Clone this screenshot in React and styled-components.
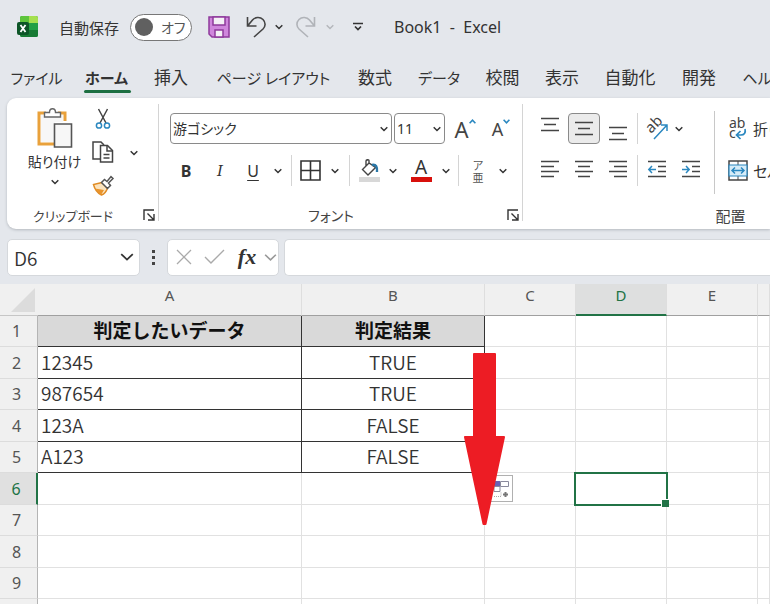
import React from "react";
import styled, { createGlobalStyle } from "styled-components";

const GlobalStyle = createGlobalStyle`
  * {
    box-sizing: border-box;
  }

  body {
    margin: 0;
    overflow: hidden;
    background-color: #e4e7ec;
    color: #333333;
    font-family: "Noto Sans", "Noto Sans CJK JP", sans-serif;
    font-size: 16px;
  }

  svg {
    overflow: visible;
  }

  button,
  input,
  select {
    margin: 0;
    padding: 0;
    border: none;
    background: none;
    color: inherit;
    font: inherit;
    font-feature-settings: inherit;
  }
`;

const tabs = [
  { name: "ファイル", width: 73, kana: true },
  { name: "ホーム", width: 67, kana: true, active: true },
  { name: "挿入", width: 62 },
  { name: "ページ レイアウト", width: 143, kana: true },
  { name: "数式", width: 60 },
  { name: "データ", width: 68, kana: true },
  { name: "校閲", width: 59 },
  { name: "表示", width: 60 },
  { name: "自動化", width: 76 },
  { name: "開発", width: 62 },
  { name: "ヘルプ", width: 68, kana: true },
];

const columns = [
  { name: "A", width: 264 },
  { name: "B", width: 183 },
  { name: "C", width: 91 },
  { name: "D", width: 91 },
  { name: "E", width: 91 },
  { name: "" },
];

const rows = [
  ["判定したいデータ", "判定結果"],
  ["12345", "TRUE"],
  ["987654", "TRUE"],
  ["123A", "FALSE"],
  ["A123", "FALSE"],
  [],
  [],
  [],
  [],
  [],
];

export default function App() {
  return (
    <Window>
      <GlobalStyle />
      <TitleBar />
      <Tabs>
        {tabs.map((tab) => (
          <Tab key={tab.name} $width={tab.width} $kana={tab.kana} $active={tab.active}>
            {tab.name}
          </Tab>
        ))}
      </Tabs>
      <Ribbon>
        <ClipboardGroup />
        <FontGroup />
        <AlignmentGroup />
      </Ribbon>
      <FormulaBar />
      <Sheet />
    </Window>
  );
}

const Window = styled.div`
  display: flex;
  flex-direction: column;
  height: 100vh;
  overflow: hidden;
`;

/* ---------- title bar ---------- */

function TitleBar() {
  return (
    <Header>
      <ExcelIcon />
      <AutoSave>
        自動保存
        <Switch>
          <SwitchInput type="checkbox" role="switch" />
          <SwitchText>オフ</SwitchText>
        </Switch>
      </AutoSave>
      <QuickAccess>
        <Slot as="button" aria-label="保存" $width={44}>
          <SaveIcon />
        </Slot>
        <Slot as="button" aria-label="元に戻す" $width={30}>
          <UndoIcon />
        </Slot>
        <ChevronButton $width={16} label="元に戻す履歴" />
        <Slot as="button" aria-label="やり直し" $width={38} disabled>
          <UndoIcon redo />
        </Slot>
        <ChevronButton $width={10} label="やり直し履歴" color="#b4b7bb" />
        <Slot as="button" aria-label="カスタマイズ" $width={46}>
          <svg width="10" height="10" fill="none" stroke="#333" strokeWidth="1.7">
            <path d="M0 1.5h10M2 4.5 5 7.5 8 4.5" />
          </svg>
        </Slot>
      </QuickAccess>
      <Title>{"Book1  -  Excel"}</Title>
    </Header>
  );
}

const Header = styled.header`
  display: flex;
  flex: none;
  align-items: center;
  height: 54px;
  padding-left: 17px;
`;

const AutoSave = styled.label`
  display: flex;
  align-items: center;
  gap: 11px;
  margin-left: 21px;
  font-size: 15px;
`;

const Switch = styled.span`
  display: grid;
  align-items: center;
  width: 62px;
  height: 27px;
`;

const SwitchInput = styled.input`
  display: flex;
  grid-area: 1 / 1;
  align-items: center;
  width: 100%;
  height: 100%;
  padding-left: 4px;
  appearance: none;
  border: 1px solid #777777;
  border-radius: 14px;
  background-color: #ffffff;

  &::before {
    content: "";
    width: 18px;
    height: 18px;
    border-radius: 50%;
    background-color: #606060;
  }
`;

const SwitchText = styled.span`
  grid-area: 1 / 1;
  padding-left: 31px;
  color: #555555;
  font-size: 14px;
  font-feature-settings: "palt";
`;

const QuickAccess = styled.div`
  display: flex;
  align-items: center;
  margin-left: 5px;
`;

const Title = styled.div`
  margin-left: 13px;
  white-space: pre;
`;

/* ---------- tabs ---------- */

const Tabs = styled.nav`
  display: flex;
  flex: none;
  height: 44px;
  padding-top: 10px;
`;

const Tab = styled.button`
  position: relative;
  flex: none;
  width: ${(props) => props.$width}px;
  height: 28px;
  font-size: ${(props) => (props.$kana ? 15 : 17)}px;
  font-weight: ${(props) => (props.$active ? 700 : 400)};
  font-feature-settings: "palt";
  line-height: 28px;
  white-space: nowrap;

  &::after {
    content: "";
    display: ${(props) => (props.$active ? "block" : "none")};
    position: absolute;
    right: 9px;
    bottom: -1px;
    left: 11px;
    height: 3px;
    border-radius: 2px;
    background-color: #1d6f42;
  }
`;

/* ---------- ribbon ---------- */

const Ribbon = styled.section`
  display: flex;
  flex: none;
  height: 131px;
  margin-left: 7px;
  overflow: hidden;
  border-radius: 9px 0 0 9px;
  background-color: #ffffff;
  box-shadow: 0 1px 3px #b4b8be;
`;

function Group({ label, labelSize, width, launcher, children }) {
  return (
    <GroupWrapper $width={width}>
      <GroupBody>{children}</GroupBody>
      <GroupFooter $size={labelSize}>
        {label}
        {launcher && (
          <Launcher aria-label={label + "の設定"}>
            <svg width="12" height="12" fill="none" stroke="#333" strokeWidth="1.4">
              <path d="M1 11V1h10M4.5 4.5l6 6M11 5v6H5" />
            </svg>
          </Launcher>
        )}
      </GroupFooter>
    </GroupWrapper>
  );
}

const GroupWrapper = styled.div`
  display: flex;
  flex: none;
  flex-direction: column;
  position: relative;
  width: ${(props) => props.$width}px;

  &::after {
    content: "";
    position: absolute;
    top: 6px;
    right: 0;
    bottom: 8px;
    width: 1px;
    background-color: #d4d4d4;
  }
`;

const GroupBody = styled.div`
  display: flex;
  flex: 1;
`;

const GroupFooter = styled.div`
  display: flex;
  align-items: center;
  justify-content: center;
  position: relative;
  height: 28px;
  padding-right: 20px;
  color: #444444;
  font-size: ${(props) => props.$size}px;
  font-feature-settings: "palt";
`;

const Launcher = styled.button`
  position: absolute;
  right: 4px;
  height: 12px;
  line-height: 0;
`;

const Slot = styled.span`
  display: flex;
  flex: none;
  align-items: center;
  justify-content: center;
  width: ${(props) => props.$width}px;
  height: 31px;
`;

const Divider = styled.span`
  flex: none;
  width: 1px;
  height: 31px;
  margin: 0 ${(props) => props.$space || 4}px;
  background-color: #d4d4d4;
`;

const ToolRows = styled.div`
  display: flex;
  flex: none;
  flex-direction: column;
  gap: 11px;
  padding: 15px 0 0 10px;
`;

const ToolRow = styled.div`
  display: flex;
  align-items: center;
  height: 31px;
`;

function Chevron({ color = "#333", size = 8 }) {
  return (
    <svg width={size} height={size} viewBox="0 0 8 8" fill="none" stroke={color} strokeWidth={size > 8 ? 1 : 1.5}>
      <path d="M0.7 2.3 4 5.5 7.3 2.3" />
    </svg>
  );
}

function ChevronButton({ $width, label, color }) {
  return (
    <Slot as="button" aria-label={label} $width={$width}>
      <Chevron color={color} />
    </Slot>
  );
}

function ClipboardGroup() {
  return (
    <Group label="クリップボード" labelSize={13} width={152} launcher>
      <Paste>
        <PasteIcon />
        <span>貼り付け</span>
        <Chevron />
      </Paste>
      <ClipboardTools>
        <button aria-label="切り取り">
          <CutIcon />
        </button>
        <button aria-label="コピー">
          <CopyIcon />
        </button>
        <button aria-label="書式のコピー">
          <BrushIcon />
        </button>
      </ClipboardTools>
      <CopyMenu>
        <ChevronButton $width={20} label="コピーのオプション" />
      </CopyMenu>
    </Group>
  );
}

const Paste = styled.button`
  display: flex;
  flex-direction: column;
  align-items: center;
  width: 71px;
  margin-left: 12px;
  padding-top: 9px;
  font-size: 14px;
  font-feature-settings: "palt";
  line-height: 26px;
  white-space: nowrap;

  > svg:last-child {
    margin-top: 3px;
  }
`;

const ClipboardTools = styled.div`
  display: flex;
  flex-direction: column;
  gap: 9px;
  padding-top: 9px;

  button {
    width: 26px;
    height: 24px;
    line-height: 0;
  }
`;

const CopyMenu = styled.div`
  padding-top: 39px;
  padding-left: 8px;
`;

function FontGroup() {
  return (
    <Group label="フォント" labelSize={14} width={364} launcher>
      <ToolRows>
        <ToolRow>
          <Dropdown $width={222}>
            <select aria-label="フォント">
              <option>游ゴシック</option>
            </select>
            <Chevron />
          </Dropdown>
          <Dropdown $width={51}>
            <select aria-label="フォント サイズ">
              <option>11</option>
            </select>
            <Chevron />
          </Dropdown>
          <Slot as="button" aria-label="フォント サイズの拡大" $width={38}>
            <LetterSize $size={22}>A</LetterSize>
            <Caret up />
          </Slot>
          <Slot as="button" aria-label="フォント サイズの縮小" $width={34}>
            <LetterSize $size={18}>A</LetterSize>
            <Caret />
          </Slot>
        </ToolRow>
        <ToolRow>
          <Letter as="button" $width={34} $weight={700}>
            B
          </Letter>
          <Letter as="button" $width={34} $italic>
            I
          </Letter>
          <Letter as="button" $width={32} $underline>
            U
          </Letter>
          <ChevronButton $width={18} label="下線の種類" />
          <Divider />
          <Slot as="button" aria-label="罫線" $width={29}>
            <svg width="21" height="21" fill="none" stroke="#333" strokeWidth="1.6">
              <path d="M1 1h19v19H1zM10.500 1v19M1 10.500h19" />
            </svg>
          </Slot>
          <ChevronButton $width={20} label="罫線の種類" />
          <Divider />
          <Slot as="button" aria-label="塗りつぶしの色" $width={30}>
            <FillIcon />
          </Slot>
          <ChevronButton $width={18} label="色の選択" />
          <Slot as="button" aria-label="フォントの色" $width={38}>
            <FontColor>A</FontColor>
          </Slot>
          <ChevronButton $width={12} label="文字色の選択" />
          <Divider $space={6} />
          <Phonetic>
            <span>ア</span>
            <span>亜</span>
          </Phonetic>
          <ChevronButton $width={24} label="ふりがなの設定" />
        </ToolRow>
      </ToolRows>
    </Group>
  );
}

const Dropdown = styled.label`
  display: grid;
  align-items: center;
  width: ${(props) => props.$width}px;
  height: 31px;
  margin: 0 1px;

  select {
    grid-area: 1 / 1;
    width: 100%;
    height: 100%;
    padding-left: 2px;
    appearance: none;
    border: 1px solid #8a8a8a;
    border-radius: 4px;
    font-size: 14px;
    font-feature-settings: "palt";
  }

  svg {
    grid-area: 1 / 1;
    justify-self: end;
    margin-right: 4px;
    pointer-events: none;
  }
`;

const LetterSize = styled.span`
  color: #444444;
  font-size: ${(props) => props.$size}px;
  line-height: 28px;
`;

function Caret({ up }) {
  return (
    <CaretIcon width="7" height="5" fill="none" stroke="#2b88c0" strokeWidth="1.6">
      <path d={up ? "M.6 4.2 3.5 1.2 6.4 4.2" : "M.6.8 3.5 3.8 6.4.8"} />
    </CaretIcon>
  );
}

const CaretIcon = styled.svg`
  align-self: flex-start;
  margin-top: 6px;
`;

const Letter = styled(Slot)`
  font-family: ${(props) => (props.$italic ? '"DejaVu Serif", serif' : "inherit")};
  font-size: ${(props) => (props.$italic ? 15 : 16)}px;
  font-style: ${(props) => (props.$italic ? "italic" : "normal")};
  font-weight: ${(props) => props.$weight || 400};
  line-height: 28px;
  text-decoration: ${(props) => (props.$underline ? "underline" : "none")};
  text-underline-offset: 3px;
`;

const FontColor = styled.span`
  width: 21px;
  height: 23px;
  border-bottom: 5px solid #d8100c;
  font-size: 19px;
  line-height: 17px;
  text-align: center;
`;

const Phonetic = styled.button`
  display: flex;
  flex-direction: column;
  width: 26px;
  color: #555555;
  font-family: "Noto Sans CJK JP", sans-serif;
  font-size: 11px;
  line-height: 12px;
`;

function AlignmentGroup() {
  return (
    <Group label="配置" labelSize={15} width={435}>
      <ToolRows>
        <ToolRow>
          <Slot as="button" aria-label="上揃え" $width={34}>
            <Lines y={5} lines={[[0, 18], [3, 15], [0, 18]]} />
          </Slot>
          <ActiveSlot as="button" aria-label="上下中央揃え" $width={32}>
            <Lines y={9} lines={[[0, 18], [3, 15], [0, 18]]} />
          </ActiveSlot>
          <Slot as="button" aria-label="下揃え" $width={34}>
            <Lines y={14} lines={[[0, 18], [3, 15], [0, 18]]} />
          </Slot>
          <Divider $space={2} />
          <Slot as="button" aria-label="方向" $width={34}>
            <OrientationIcon />
          </Slot>
          <ChevronButton $width={10} label="方向の設定" />
        </ToolRow>
        <ToolRow>
          <Slot as="button" aria-label="左揃え" $width={34}>
            <Lines y={6} lines={[[0, 18], [0, 13], [0, 18], [0, 13]]} />
          </Slot>
          <Slot as="button" aria-label="中央揃え" $width={34}>
            <Lines y={6} lines={[[0, 18], [3, 15], [0, 18], [3, 15]]} />
          </Slot>
          <Slot as="button" aria-label="右揃え" $width={34}>
            <Lines y={6} lines={[[0, 18], [5, 18], [0, 18], [5, 18]]} />
          </Slot>
          <Divider $space={2} />
          <Slot as="button" aria-label="インデントを減らす" $width={34}>
            <Lines y={6} lines={[[0, 18], [10, 18], [10, 18], [0, 18]]} arrow="M8 14.5H1M4 11 .8 14.5 4 18" />
          </Slot>
          <Slot as="button" aria-label="インデントを増やす" $width={34}>
            <Lines y={6} lines={[[0, 18], [10, 18], [10, 18], [0, 18]]} arrow="M0 14.5H7M4 11 7.2 14.5 4 18" />
          </Slot>
        </ToolRow>
      </ToolRows>
      <WrapTools>
        <WrapButton>
          <WrapIcon />
          折り返して全体を表示する
        </WrapButton>
        <WrapButton>
          <MergeIcon />
          セルを結合して中央揃え
        </WrapButton>
      </WrapTools>
    </Group>
  );
}

const ActiveSlot = styled(Slot)`
  margin: 0 1px;
  border: 1px solid #8a8a8a;
  border-radius: 4px;
  background-color: #ebebeb;
`;

const WrapTools = styled.div`
  display: flex;
  flex-direction: column;
  gap: 11px;
  height: 83px;
  margin: 13px 0 0 6px;
  padding: 2px 0 0 13px;
  border-left: 1px solid #c8c8c8;
`;

const WrapButton = styled.button`
  display: flex;
  align-items: center;
  gap: 5px;
  height: 31px;
  font-size: 15px;
  font-feature-settings: "palt";
  white-space: nowrap;
`;

/* ---------- formula bar ---------- */

function FormulaBar() {
  return (
    <FormulaRow>
      <NameBox>
        <input aria-label="名前ボックス" defaultValue="D6" />
        <Chevron size={14} />
      </NameBox>
      <svg width="27" height="16" fill="#444">
        <path d="M12 1h3v3h-3zM12 7h3v3h-3zM12 13h3v3h-3z" />
      </svg>
      <FormulaTools>
        <Slot as="button" aria-label="キャンセル" $width={31}>
          <svg width="16" height="16" fill="none" stroke="#aaa" strokeWidth="1.3">
            <path d="M1 1l14 14M15 1 1 15" />
          </svg>
        </Slot>
        <Slot as="button" aria-label="入力" $width={31}>
          <svg width="21" height="16" fill="none" stroke="#aaa" strokeWidth="1.4">
            <path d="M1 8l6 6L20 1" />
          </svg>
        </Slot>
        <FunctionButton as="button" $width={34}>
          fx
        </FunctionButton>
        <Chevron size={13} color="#999" />
      </FormulaTools>
      <FormulaInput aria-label="数式バー" />
    </FormulaRow>
  );
}

const FormulaRow = styled.div`
  display: flex;
  flex: none;
  align-items: center;
  height: 55px;
  padding: 1px 0 0 7px;
`;

const Field = styled.div`
  display: flex;
  align-items: center;
  height: 37px;
  border: 1px solid #d5d8dc;
  border-radius: 5px;
  background-color: #ffffff;
`;

const NameBox = styled(Field)`
  width: 133px;
  padding: 0 5px 0 6px;

  input {
    flex: 1;
    min-width: 0;
    font-family: "Noto Sans CJK JP", sans-serif;
    font-size: 19px;
    font-weight: 350;
  }
`;

const FormulaTools = styled(Field)`
  width: 112px;
`;

const FunctionButton = styled(Slot)`
  font-family: "Liberation Serif", serif;
  font-size: 22px;
  font-style: italic;
  font-weight: 700;
`;

const FormulaInput = styled.input`
  flex: 1;
  min-width: 0;
  height: 37px;
  margin-left: 5px;
  border: 1px solid #d5d8dc;
  border-right: none;
  border-radius: 5px 0 0 5px;
  background-color: #ffffff;
`;

/* ---------- sheet ---------- */

function Sheet() {
  return (
    <SheetWrapper>
      <Grid>
        <colgroup>
          <Col $width={38} />
          {columns.map((column) => (
            <Col key={column.name} $width={column.width} />
          ))}
        </colgroup>
        <thead>
          <tr>
            <Corner>
              <svg width="24" height="24" fill="#dcdcdc">
                <path d="M24 0v24H0z" />
              </svg>
            </Corner>
            {columns.map(({ name }) => (
              <ColumnHead key={name} $active={name === "D"}>
                {name}
              </ColumnHead>
            ))}
          </tr>
        </thead>
        <tbody>
          {rows.map((row, i) => (
            <Row key={i}>
              <RowHead $active={i === 5}>{i + 1}</RowHead>
              {columns.map(({ name }, j) => (
                <Cell key={name} $filled={j < 2 && i < 5} $head={j < 2 && i === 0} $center={j === 1}>
                  {row[j]}
                  {name === "D" && i === 5 && <Selection />}
                </Cell>
              ))}
            </Row>
          ))}
        </tbody>
      </Grid>
      <FillOptions aria-label="オートフィル オプション">
        <svg width="20" height="23" fill="none">
          <path d="M3 4h6v5H3z" fill="#6a62b5" />
          <path d="M9.500 4.500h8v5h-8zM3 9.500h6v5H3z" stroke="#8a8a9c" />
          <path d="M3 19.500h7v-5" stroke="#aaa" strokeDasharray="1 1" />
          <path d="M14.500 15v5M12 17.500h5" stroke="#777" strokeWidth="2" />
        </svg>
      </FillOptions>
      <Arrow width="42" height="172" viewBox="0 0 42 172">
        <path
          d="M10 1h21v83h9L21.500 171h-2L1 84h9z"
          fill="#ed1c24"
          stroke="#ed1c24"
          strokeWidth="2"
          strokeLinejoin="round"
        />
      </Arrow>
    </SheetWrapper>
  );
}

const SheetWrapper = styled.main`
  position: relative;
  flex: 1;
  overflow: hidden;
  background-color: #ffffff;
`;

const Grid = styled.table`
  width: 100%;
  table-layout: fixed;
  border-collapse: separate;
  border-spacing: 0;
`;

const Col = styled.col`
  width: ${(props) => (props.$width ? props.$width + "px" : "auto")};
`;

const Corner = styled.th`
  height: 32px;
  padding: 0 3px 3px 0;
  background-color: #f0f0f0;
  border-bottom: 1px solid #c6c6c6;
  line-height: 0;
  text-align: right;
  vertical-align: bottom;
`;

const ColumnHead = styled.th`
  height: 32px;
  padding: 0;
  background-color: ${(props) => (props.$active ? "#dedfdf" : "#f0f0f0")};
  border-right: 1px solid #dedede;
  border-bottom: ${(props) => (props.$active ? "2px solid #217346" : "1px solid #a0a0a0")};
  color: ${(props) => (props.$active ? "#217346" : "#555555")};
  font-size: 15px;
  font-weight: 400;
  line-height: 23px;
  vertical-align: top;
`;

const Row = styled.tr`
  height: 31px;

  &:nth-child(even) {
    height: 32px;
  }
`;

const RowHead = styled.th`
  padding: 0 4px 0 0;
  background-color: ${(props) => (props.$active ? "#e0e0e0" : "#f0f0f0")};
  border-right: ${(props) => (props.$active ? "2px solid #217346" : "1px solid #b4b4b4")};
  border-bottom: 1px solid #dcdcdc;
  color: ${(props) => (props.$active ? "#217346" : "#555555")};
  font-size: 16px;
  font-weight: 400;
  line-height: 24px;
`;

const Cell = styled.td`
  position: relative;
  padding: 0 3px 2px;
  background-color: ${(props) => (props.$head ? "#d9d9d9" : "#ffffff")};
  border: 0 solid ${(props) => (props.$filled ? "#333333" : "#e1e1e1")};
  border-width: 0 1px 1px 0;
  color: ${(props) => (props.$head ? "#111111" : "#333333")};
  font-family: "Noto Sans CJK JP", sans-serif;
  font-size: 19px;
  font-weight: ${(props) => (props.$head ? 700 : 350)};
  line-height: 28px;
  text-align: ${(props) => (props.$head || props.$center ? "center" : "left")};
  white-space: nowrap;
`;

const Selection = styled.div`
  position: absolute;
  inset: -1px -2px -2px -2px;
  z-index: 1;
  border: 2px solid #217346;

  &::after {
    content: "";
    position: absolute;
    right: -3px;
    bottom: -3px;
    width: 7px;
    height: 7px;
    border: 1px solid #ffffff;
    border-width: 1px 0 0 1px;
    background-color: #217346;
  }
`;

const FillOptions = styled.button`
  position: absolute;
  top: 191px;
  left: 488px;
  width: 25px;
  height: 27px;
  border: 1px solid #b0b0b0;
  background-color: #ffffff;
  line-height: 0;
`;

const Arrow = styled.svg`
  position: absolute;
  top: 69px;
  left: 464px;
`;

/* ---------- icons ---------- */

function ExcelIcon() {
  return (
    <svg width="21" height="22">
      <rect x="3" width="18" height="21" rx="2" fill="#21a045" />
      <path d="M12 0h7a2 2 0 0 1 2 2v5h-9z" fill="#a5e04f" />
      <path d="M5 0h7v7H3V2a2 2 0 0 1 2-2z" fill="#5dc43c" />
      <path d="M3 14h18v5a2 2 0 0 1-2 2H5a2 2 0 0 1-2-2z" fill="#177a34" />
      <rect y="6" width="12" height="13" rx="2" fill="#0c5527" />
      <path d="M3.500 9l5 7M8.500 9l-5 7" stroke="#fff" strokeWidth="1.800" />
    </svg>
  );
}

function SaveIcon() {
  return (
    <svg width="22" height="22" stroke="#8f3a9c" strokeWidth="1.500">
      <path d="M1 1h20v20H4l-3-3z" fill="#cf86dc" />
      <path d="M5 1h12v8H5z" fill="#f4f0f6" />
      <path d="M7 21v-7h8v7z" fill="#f4f0f6" />
    </svg>
  );
}

function UndoIcon({ redo }) {
  return (
    <svg width="20" height="22" fill="none" stroke={redo ? "#b0b3b8" : "#444"} strokeWidth="1.600">
      <path
        transform={redo ? "matrix(-1 0 0 1 20 0)" : undefined}
        d="M1.500 1v9h9M1.500 10l5-6C9 1 14 .500 17 3.500s2.500 7 0 9.500L8 21"
      />
    </svg>
  );
}

function PasteIcon() {
  return (
    <svg width="37" height="42" fill="none">
      <path d="M10 6H3v31h15M22 6h7v8" stroke="#e9a13b" strokeWidth="3" />
      <path d="M5 8h22v7h-8v20H5z" fill="#f7f7f7" />
      <path d="M8.500 10V5.500h5c0-5 6-5 6 0h5V10z" fill="#fff" stroke="#666" strokeWidth="1.400" />
      <path d="M18.500 17h17v23h-17z" fill="#f7f7f7" stroke="#555" strokeWidth="1.600" />
    </svg>
  );
}

function CutIcon() {
  return (
    <svg width="16" height="22" fill="none" strokeWidth="1.500">
      <path d="M3.500 1 11 15M12.500 1 5 15" stroke="#444" />
      <circle cx="4" cy="17.500" r="2.600" stroke="#2b88c0" />
      <circle cx="12" cy="17.500" r="2.600" stroke="#2b88c0" />
    </svg>
  );
}

function CopyIcon() {
  return (
    <svg width="22" height="22" fill="none" stroke="#444" strokeWidth="1.500">
      <path d="M8 18H1V1h8l3 3" />
      <path d="M8.500 4.500h7l5 5V21h-12z" fill="#fff" />
      <path d="M15 4.500V10h5.500M11.500 13.500h6M11.500 17h6" />
    </svg>
  );
}

function BrushIcon() {
  return (
    <svg width="22" height="21" fill="none" strokeWidth="1.500">
      <path d="M10 7.500 1.500 9.500c1 4 4 8.500 8 10.500 3-1 5-4 6-7z" fill="#fbe3bd" stroke="#e08b24" />
      <path d="M3 13.500l9 1.500-3 5z" fill="#e9942c" />
      <path d="M9.500 7.500l3-3 2.500 2L19 1.500l2 2-4.500 4.500 2 2.500-3 3z" fill="#fff" stroke="#555" />
    </svg>
  );
}

function FillIcon() {
  return (
    <svg width="21" height="23" fill="none">
      <path d="M10 4 3.500 10.500 9 16l7.500-7.500zM10 4V1.500c0-1-3-1-3 .500V7" stroke="#444" strokeWidth="1.400" />
      <path d="M13 6c4-1 5.500 2 5 7" stroke="#2b78a8" strokeWidth="2.400" />
      <path d="M0 18h21v5H0z" fill="#d8d8d8" />
    </svg>
  );
}

function Lines({ y, lines, arrow }) {
  const step = lines.length === 3 ? 6 : 5;
  return (
    <svg width="18" height="31" fill="none" strokeWidth="1.500">
      {lines.map(([from, to], i) => (
        <path key={i} d={`M${from} ${y + i * step + 0.5}H${to}`} stroke="#444" />
      ))}
      {arrow && <path d={arrow} stroke="#2b88c0" />}
    </svg>
  );
}

function OrientationIcon() {
  return (
    <svg width="23" height="24" fill="none">
      <text x="5" y="17" transform="rotate(-45 5 17)" fill="#444" fontSize="15">
        ab
      </text>
      <path d="M8 22 21 8M15 8h6v6" stroke="#2b88c0" strokeWidth="1.500" />
    </svg>
  );
}

function WrapIcon() {
  return (
    <svg width="20" height="24" fill="none">
      <text x="1" y="11" fill="#444" fontSize="14">
        ab
      </text>
      <text x="1" y="21" fill="#444" fontSize="14">
        c
      </text>
      <path d="M17 12c1 4-1 6-4 6H9M12.500 14 8.500 18l4 4" stroke="#2b88c0" strokeWidth="1.700" />
    </svg>
  );
}

function MergeIcon() {
  return (
    <svg width="20" height="21" fill="none">
      <path d="M1 1h18v19H1z" fill="#fff" stroke="#444" strokeWidth="1.500" />
      <path d="M10 1v19" stroke="#444" />
      <path d="M1 5h18v11H1z" fill="#d6ecf8" stroke="#2b88c0" strokeWidth="1.200" />
      <path d="M4 10.500h12M7 7.500l-3 3 3 3M13 7.500l3 3-3 3" stroke="#2b88c0" strokeWidth="1.500" />
    </svg>
  );
}
